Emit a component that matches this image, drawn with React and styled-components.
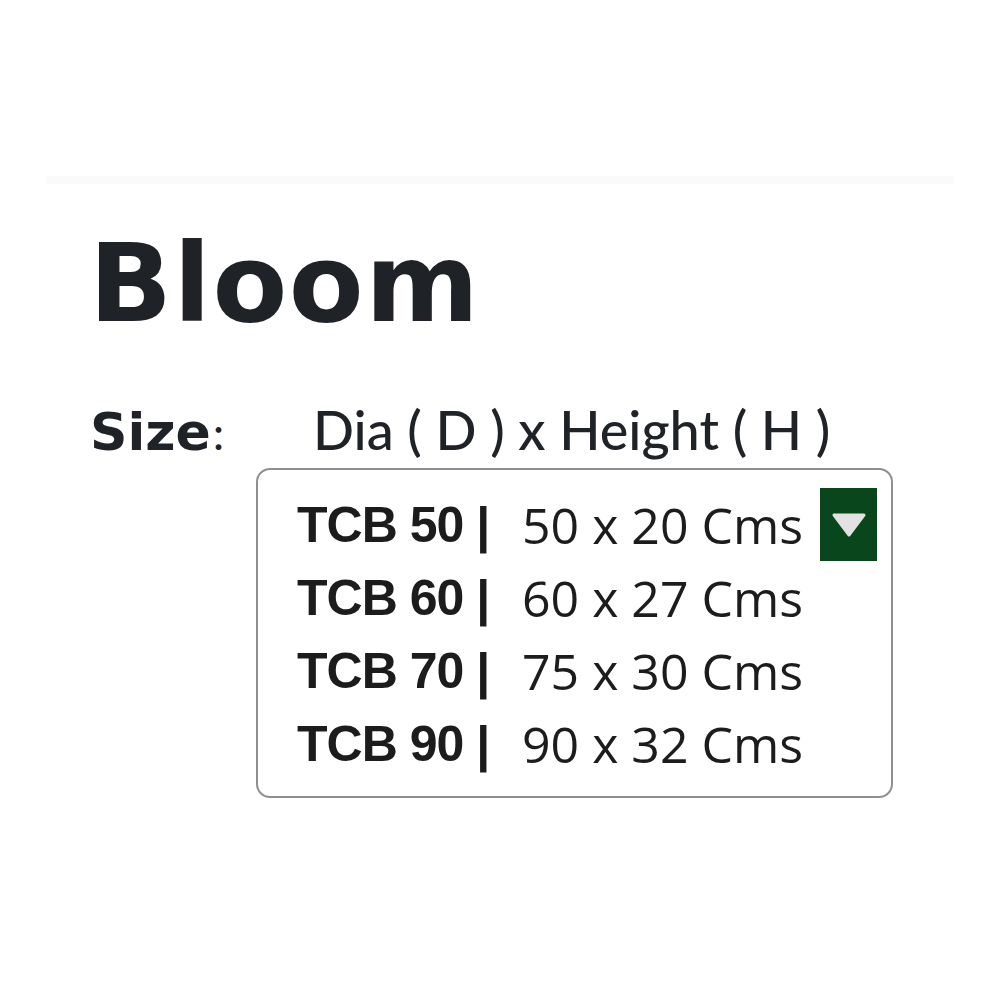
import React from "react";
import styled, { createGlobalStyle } from "styled-components";

const Global = createGlobalStyle`
  html, body { margin: 0; padding: 0; background: #ffffff; }
  body { width: 1000px; height: 1000px; overflow: hidden; }
`;

const Page = styled.div`
  display: flex;
  flex-direction: column;
  padding-top: 176px;
`;

const Divider = styled.div`
  height: 8px;
  margin: 0 46px;
  background: #fafafa;
`;

const Title = styled.h1`
  margin: 30px 0 0 89px;
  font-family: "DejaVu Sans", Verdana, sans-serif;
  font-weight: 700;
  font-size: 109px;
  letter-spacing: 1.5px;
  line-height: 140px;
  color: #1f2227;
`;

const SizeRow = styled.div`
  display: flex;
  align-items: baseline;
  margin: 46px 0 0 90px;
  font-family: Lato, "Noto Sans", sans-serif;
  font-size: 54px;
  line-height: 60px;
  color: #1f2227;
`;

const SizeLabel = styled.span`
  font-family: "DejaVu Sans", Verdana, sans-serif;
  font-weight: 700;
  font-size: 52px;
  width: 223px;
  b { font-family: Lato, sans-serif; font-weight: 400; font-size: 46px; margin-left: 2px; }
`;

const Dims = styled.span`
  font-weight: 500;
`;

const Box = styled.div`
  margin: 5px 0 0 256px;
  width: 637px;
  box-sizing: border-box;
  border: 2px solid #8f8f8f;
  border-radius: 14px;
  padding: 18px 0 16px 39px;
  display: flex;
  flex-direction: column;
`;

const Option = styled.div`
  display: flex;
  align-items: center;
  height: 73px;
  color: #1c1c1c;
`;

const Code = styled.span`
  font-family: "Liberation Sans", Arial, sans-serif;
  font-weight: 700;
  font-size: 50px;
  width: 225px;
  letter-spacing: -1px;
`;

const Measure = styled.span`
  font-family: "Open Sans", sans-serif;
  font-size: 50px;
  font-weight: 400;
  flex: 1;
`;

const Arrow = styled.div`
  width: 57px;
  height: 73px;
  margin-right: 14px;
  background: #0a461b;
  display: flex;
  align-items: center;
  justify-content: center;
`;

const options = [
  ["TCB 50 |", "50 x 20 Cms"],
  ["TCB 60 |", "60 x 27 Cms"],
  ["TCB 70 |", "75 x 30 Cms"],
  ["TCB 90 |", "90 x 32 Cms"],
];

export default function App() {
  return (
    <>
      <Global />
      <Page>
        <Divider />
        <Title>Bloom</Title>
        <SizeRow>
          <SizeLabel>
            Size<b>:</b>
          </SizeLabel>
          <Dims>Dia ( D ) x Height ( H )</Dims>
        </SizeRow>
        <Box>
          {options.map(([code, m], i) => (
            <Option key={code}>
              <Code>{code}</Code>
              <Measure>{m}</Measure>
              {i === 0 && (
                <Arrow>
                  <svg width="36" height="26" viewBox="0 0 36 26">
                    <path d="M3 3 H33 L18 23 Z" fill="#e2e2e2" stroke="#e2e2e2" strokeWidth="3" strokeLinejoin="round" />
                  </svg>
                </Arrow>
              )}
            </Option>
          ))}
        </Box>
      </Page>
    </>
  );
}
